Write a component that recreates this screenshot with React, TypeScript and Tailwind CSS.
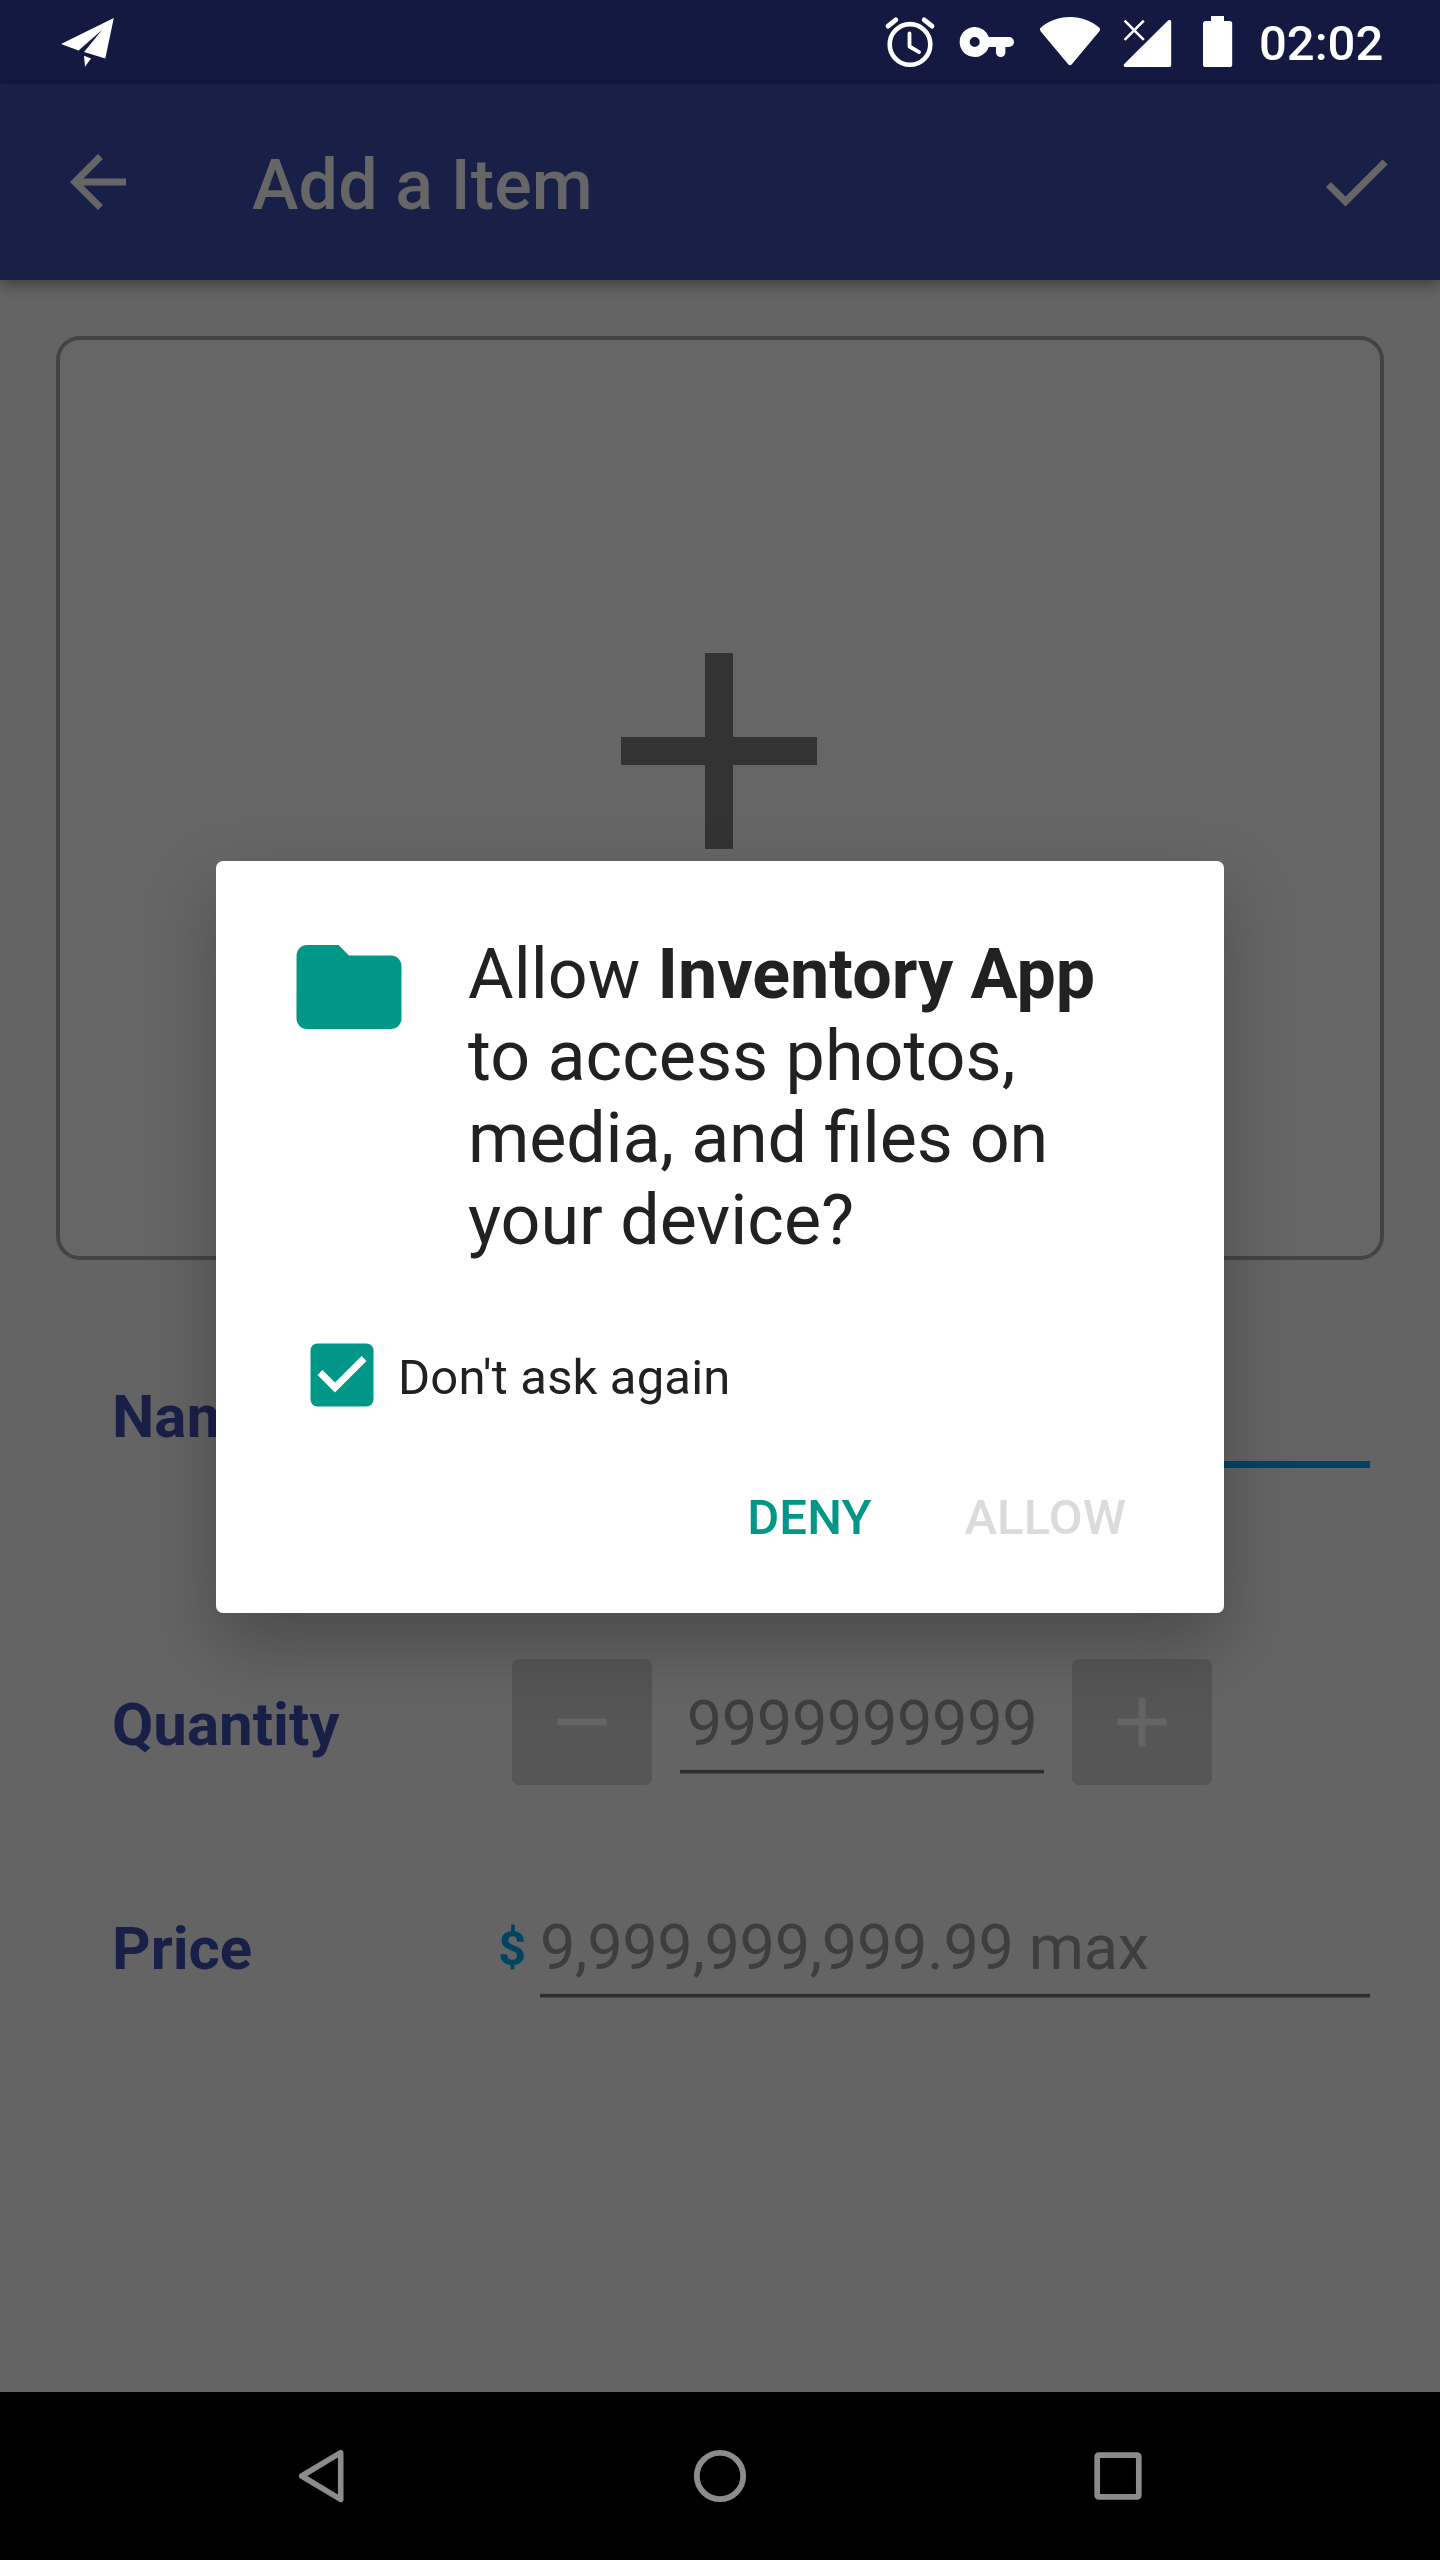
import React from "react";

function StatusBar() {
  return (
    <header className="flex h-[84px] items-start bg-[#131940] pr-[56px] pl-[56px] text-white">
      <svg className="h-[84px] w-[64px]" viewBox="56 0 64 84" fill="currentColor">
        <path d="M113.8 18L61 44l17.5 6.5L102 30 84 52l21.3 6.6z" />
        <path d="M84 55.8l7 2.7-6 8.3z" />
      </svg>
      <div className="flex-1" />
      <svg className="h-[84px] w-[52px]" viewBox="884 0 52 84" fill="none" stroke="currentColor" strokeLinecap="round" strokeLinejoin="round">
        <circle cx="910" cy="44.4" r="20.3" strokeWidth="4.6" />
        <path d="M909.5 33.5v13l9.6 5.6" strokeWidth="3.8" />
        <path d="M888 26.2l7.8-6.4M932 26.2l-7.8-6.4" strokeWidth="4.8" />
      </svg>
      <svg className="ml-[22px] h-[84px] w-[58px]" viewBox="958 0 58 84" fill="currentColor">
        <path
          fillRule="evenodd"
          d="M974.7 27a15 15 0 0 1 14.1 10H1009a5 5 0 0 1 0 10h-3.600v5.400a4.600 4.600 0 0 1-9.400 0V47h-7.200A15 15 0 1 1 974.700 27zm0 10a5 5 0 1 0 0 10 5 5 0 0 0 0-10z"
        />
      </svg>
      <svg className="ml-[22px] h-[84px] w-[64px]" viewBox="1038 0 64 84" fill="currentColor">
        <path d="M1041 27.500C1048 21.500 1058 17 1070 17s22 4.500 29 10.500c1.300 1.100 1.400 2.500.4 3.800L1071.600 64.400q-1.600 1.600-3.200 0L1040.600 31.300c-1-1.300-.9-2.700.4-3.800z" />
      </svg>
      <svg className="ml-[20px] h-[84px] w-[52px]" viewBox="1122 0 52 84" fill="currentColor">
        <path d="M1125.500 67h44a1.700 1.700 0 0 0 1.700-1.700V21.800c0-1.800-2-2.400-3.200-1.200L1124.200 64c-1.200 1.300-.4 3 1.300 3z" />
        <path d="M1124.600 20.600l19.200 19.200M1143.800 20.600l-19.200 19.200" fill="none" stroke="currentColor" strokeWidth="2.600" />
      </svg>
      <svg className="ml-[26px] h-[84px] w-[34px]" viewBox="1200 0 34 84" fill="currentColor">
        <path d="M1211 16h13v5h5.600a2.600 2.600 0 0 1 2.600 2.600v40.800a2.600 2.600 0 0 1-2.600 2.600h-24a2.600 2.600 0 0 1-2.600-2.600V23.600a2.600 2.600 0 0 1 2.600-2.600h5.400z" />
      </svg>
      <span className="ml-[25px] w-[125px] pt-[2px] text-[49px] leading-[84px] font-medium whitespace-nowrap">02:02</span>
    </header>
  );
}

function Toolbar() {
  return (
    <div className="relative flex h-[196px] items-center bg-[#192048] pr-[42px] pl-[56px] text-[#666666] shadow-[0_4px_14px_rgba(0,0,0,0.4)]">
      <svg className="size-[84px]" viewBox="0 0 24 24" fill="currentColor">
        <path d="M20 11H7.830l5.590-5.590L12 4l-8 8 8 8 1.410-1.410L7.830 13H20v-2z" />
      </svg>
      <h1 className="ml-[112px] flex-1 pt-[5px] text-[70px] leading-[82px] font-medium tracking-[0.15px]">Add a Item</h1>
      <svg className="size-[84px]" viewBox="0 0 24 24" fill="currentColor">
        <path d="M9 16.170L4.830 12l-1.420 1.410L9 19 21 7l-1.410-1.410z" />
      </svg>
    </div>
  );
}

function Underline() {
  return <div className="h-[5px] border-y border-t-[#5c5c5c] border-b-[#4a4a4a] bg-[#2e2e2e]" />;
}

function StepButton({ plus = false }: { plus?: boolean }) {
  return (
    <div className="flex h-[126px] w-[140px] items-center justify-center rounded-[7px] bg-[#565656] text-[#656565]">
      <svg className="size-[84px]" viewBox="0 0 24 24" fill="currentColor">
        <path d={plus ? "M19 13h-6v6h-2v-6H5v-2h6V5h2v6h6z" : "M5 11h14v2H5z"} />
      </svg>
    </div>
  );
}

function Label({ children }: { children: React.ReactNode }) {
  return <span className="w-[400px] text-[60px] leading-[70px] font-bold text-[#192048]">{children}</span>;
}

function ItemForm() {
  return (
    <main className="flex h-[2112px] flex-col bg-[#646464] pt-[56px]">
      <div className="mx-[56px] flex h-[924px] justify-center rounded-[24px] border-4 border-[#444444] bg-[#666666] pt-[243px] pr-[2px]">
        <svg className="size-[336px]" viewBox="0 0 24 24" fill="#333333">
          <path d="M19 13h-6v6h-2v-6H5v-2h6V5h2v6h6z" />
        </svg>
      </div>

      <div className="mt-[96px] flex h-[112px] pr-[70px] pl-[112px]">
        <div className="pt-[26px]">
          <Label>Name</Label>
        </div>
        <div className="ml-[250px] flex-1 border-b-[7px] border-[#004462]" />
      </div>

      <div className="mt-[191px] flex h-[126px] pl-[112px]">
        <div className="flex w-[400px] pt-[31px]">
          <Label>Quantity</Label>
        </div>
        <StepButton />
        <div className="ml-[28px] flex w-[364px] flex-col">
          <div className="h-[110px] pt-[28px] text-center text-[63px] leading-[74px] tracking-[-0.36px] text-[#3e3e3e]">9999999999</div>
          <Underline />
        </div>
        <div className="ml-[28px]">
          <StepButton plus />
        </div>
      </div>

      <div className="mt-[101px] flex h-[113px] pr-[70px] pl-[112px]">
        <div className="flex w-[386px] pt-[28px]">
          <Label>Price</Label>
        </div>
        <span className="w-[42px] pt-[34px] text-[49px] leading-[58px] font-bold text-[#004462]">$</span>
        <div className="flex flex-1 flex-col">
          <div className="h-[107px] pt-[25px] text-[63px] leading-[74px] tracking-[-0.32px] text-[#3e3e3e]">9,999,999,999.99 max</div>
          <Underline />
        </div>
      </div>
    </main>
  );
}

function NavigationBar() {
  return (
    <nav className="flex h-[168px] items-center bg-black pl-[280px]">
      <svg className="size-[84px]" viewBox="0 0 84 84" fill="none" stroke="#8c8c8c" strokeWidth="5.600" strokeLinejoin="round">
        <path d="M60.700 18.600v46.800L21.700 42z" />
      </svg>
      <svg className="ml-[314px] size-[84px]" viewBox="0 0 84 84" fill="none" stroke="#8c8c8c" strokeWidth="5.800">
        <circle cx="42" cy="42" r="23.200" />
      </svg>
      <svg className="ml-[314px] size-[84px]" viewBox="0 0 84 84" fill="none" stroke="#8c8c8c" strokeWidth="5.700">
        <rect x="21.200" y="21.200" width="41.600" height="41.600" rx="1.500" />
      </svg>
    </nav>
  );
}

function PermissionDialog() {
  return (
    <div className="absolute top-[861px] left-[216px] h-[752px] w-[1008px] rounded-[7px] bg-white text-[#212121] shadow-[0_32px_70px_rgba(0,0,0,0.25)]">
      <div className="flex pl-[70px]">
        <svg className="mt-[63px] size-[126px]" viewBox="0 0 24 24" fill="#009688">
          <path d="M10 4H4c-1.100 0-1.990.9-1.990 2L2 18c0 1.100.9 2 2 2h16c1.100 0 2-.9 2-2V8c0-1.100-.9-2-2-2h-8l-2-2z" />
        </svg>
        <p className="mt-[72px] ml-[56px] text-[70px] leading-[82px] whitespace-nowrap">
          Allow <b className="font-bold">Inventory App</b>
          <br />
          to access photos,
          <br />
          <span className="tracking-[-0.15px] [font-feature-settings:'liga'_1]">media, and files on</span>
          <br />
          your device?
        </p>
      </div>
      <div className="mt-[72px] flex h-[84px] items-center pl-[84px]">
        <svg className="size-[84px]" viewBox="0 0 24 24">
          <rect x="3" y="3" width="18" height="18" rx="2" fill="#009688" />
          <path d="M10 17l-5-5 1.410-1.410L10 14.170l7.590-7.590L19 8z" fill="#fff" />
        </svg>
        <span className="ml-[14px] pt-[5px] text-[49px] leading-[58px] tracking-[0.15px]">Don't ask again</span>
      </div>
      <div className="mt-[72px] flex justify-end gap-[93px] pr-[98px] text-[49px] leading-[58px] font-medium tracking-[0.15px]">
        <span className="text-[#009688]">DENY</span>
        <span className="text-[#dbdbdb]">ALLOW</span>
      </div>
    </div>
  );
}

export default function App() {
  return (
    <div className="relative h-[2560px] w-[1440px] overflow-hidden bg-[#646464] font-['Roboto',sans-serif]">
      <StatusBar />
      <Toolbar />
      <ItemForm />
      <NavigationBar />
      <PermissionDialog />
    </div>
  );
}
